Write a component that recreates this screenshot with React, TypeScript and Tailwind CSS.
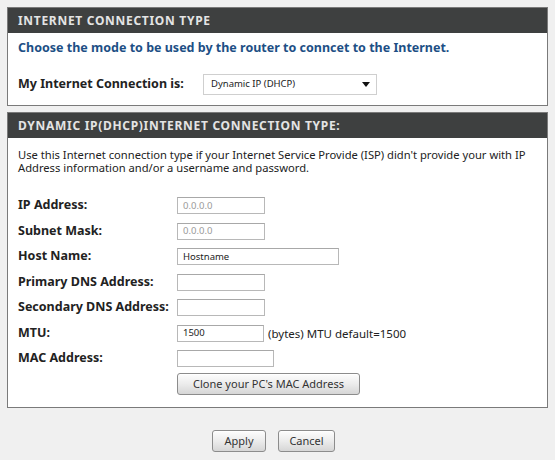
import React from "react";

const font = { fontFamily: '"Noto Sans", "Liberation Sans", sans-serif' };

function Field({ w, value, muted }: { w: string; value?: string; muted?: boolean }) {
  return (
    <div
      className={`h-[17px] ${w} border border-[#b8b8b8] border-t-[#a8a8a8] bg-white flex items-center px-[5px] text-[9.5px] ${muted ? "text-[#9a9a9a]" : "text-[#222]"}`}
    >
      {value}
    </div>
  );
}

function Btn({ children, w }: { children: React.ReactNode; w: string }) {
  return (
    <div
      className={`h-[22px] ${w} flex items-center justify-center rounded-[3px] border border-[#8c8c8c] bg-gradient-to-b from-[#fdfdfd] via-[#ececec] to-[#d6d6d6] text-[11px] text-[#333] shadow-[inset_0_1px_0_#fff]`}
    >
      {children}
    </div>
  );
}

function Row({ label, children }: { label: string; children: React.ReactNode }) {
  return (
    <div className="flex items-center h-[25.5px]">
      <div className="w-[159px] shrink-0 text-[12.5px] font-bold text-[#222]">{label}</div>
      {children}
    </div>
  );
}

export default function App() {
  return (
    <div className="w-[555px] h-[460px] bg-[#f0f0f0] pt-[7px] px-[7px]" style={font}>
      <div className="border border-[#7a7a7a] bg-white">
        <div className="h-[25px] bg-[#3e4040] flex items-center px-[10px] text-[12px] font-bold tracking-[0.7px] text-[#e4e4e4]">
          INTERNET CONNECTION TYPE
        </div>
        <div className="px-[10px] pt-[7px] pb-[10px]">
          <div className="text-[12.5px] leading-[16px] font-bold text-[#1d4f85]">
            Choose the mode to be used by the router to conncet to the Internet.
          </div>
          <div className="flex items-center mt-[18px]">
            <div className="w-[185px] shrink-0 text-[12.5px] font-bold text-[#222]">My Internet Connection is:</div>
            <div className="h-[21px] w-[174px] border border-[#cfcfcf] bg-white flex items-center justify-between pl-[7px] pr-[6px] text-[9.5px] text-[#222]">
              <span>Dynamic IP (DHCP)</span>
              <svg width="8" height="5" viewBox="0 0 8 5">
                <path d="M0 0 H8 L4 5 Z" fill="#111" />
              </svg>
            </div>
          </div>
        </div>
      </div>

      <div className="mt-[6px] border border-[#7a7a7a] bg-white">
        <div className="h-[25px] bg-[#3e4040] flex items-center px-[10px] text-[12px] font-bold tracking-[0.7px] text-[#e4e4e4]">
          DYNAMIC IP(DHCP)INTERNET CONNECTION TYPE:
        </div>
        <div className="px-[10px] pt-[10px] pb-[10px]">
          <div className="text-[11.2px] leading-[13px] text-[#222]">
            Use this Internet connection type if your Internet Service Provide (ISP) didn't provide your with IP Address information and/or a username and password.
          </div>
          <div className="mt-[19px] flex flex-col">
            <Row label="IP Address:">
              <Field w="w-[88px]" value="0.0.0.0" muted />
            </Row>
            <Row label="Subnet Mask:">
              <Field w="w-[88px]" value="0.0.0.0" muted />
            </Row>
            <Row label="Host Name:">
              <Field w="w-[162px]" value="Hostname" />
            </Row>
            <Row label="Primary DNS Address:">
              <Field w="w-[88px]" />
            </Row>
            <Row label="Secondary DNS Address:">
              <Field w="w-[88px]" />
            </Row>
            <Row label="MTU:">
              <Field w="w-[87px]" value="1500" />
              <span className="ml-[4px] text-[11.5px] text-[#222]">(bytes) MTU default=1500</span>
            </Row>
            <Row label="MAC Address:">
              <Field w="w-[97px]" />
            </Row>
            <div className="flex items-center h-[25.5px] pl-[159px]">
              <Btn w="w-[183px]">Clone your PC's MAC Address</Btn>
            </div>
          </div>
        </div>
      </div>

      <div className="mt-[22px] flex justify-center gap-[12px] pr-[8px]">
        <Btn w="w-[54px]">Apply</Btn>
        <Btn w="w-[57px]">Cancel</Btn>
      </div>
    </div>
  );
}
